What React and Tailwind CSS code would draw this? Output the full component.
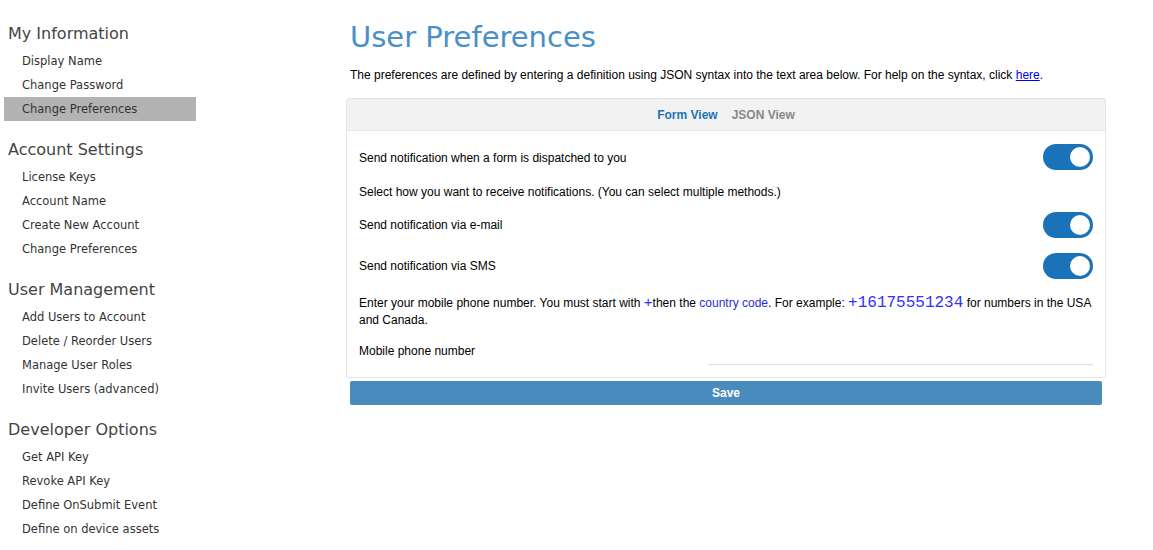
import { useState } from 'react'

const NAV = [
  { title: 'My Information', items: ['Display Name', 'Change Password', 'Change Preferences'] },
  { title: 'Account Settings', items: ['License Keys', 'Account Name', 'Create New Account', 'Change Preferences'] },
  { title: 'User Management', items: ['Add Users to Account', 'Delete / Reorder Users', 'Manage User Roles', 'Invite Users (advanced)'] },
  { title: 'Developer Options', items: ['Get API Key', 'Revoke API Key', 'Define OnSubmit Event', 'Define on device assets'] },
]

const Toggle = ({ on, onChange }) => (
  <button
    type="button"
    onClick={onChange}
    className={`relative w-[50px] h-[26px] rounded-full shrink-0 ${on ? 'bg-[#1a73b9]' : 'bg-[#ccc]'}`}
  >
    <span
      className={`absolute top-[3px] w-[20px] h-[20px] rounded-full bg-white ${on ? 'left-[27px]' : 'left-[3px]'}`}
    />
  </button>
)

const Sidebar = () => (
  <nav className="w-[196px] shrink-0 pl-[4px] pt-[23px] font-['DejaVu_Sans',sans-serif] text-[#333]">
    {NAV.map((sec) => (
      <div key={sec.title} className="mb-[18px]">
        <h3 className="pl-[4px] text-[16px] leading-[22px] text-[#444]">{sec.title}</h3>
        <ul className="mt-[4px]">
          {sec.items.map((it, i) => (
            <li
              key={it}
              className={`h-[24px] leading-[24px] pl-[18px] text-[11.5px] ${
                sec.title === 'My Information' && i === 2 ? 'bg-[#b3b3b3]' : ''
              }`}
            >
              {it}
            </li>
          ))}
        </ul>
      </div>
    ))}
  </nav>
)

export default function App() {
  const [dispatch, setDispatch] = useState(true)
  const [email, setEmail] = useState(true)
  const [sms, setSms] = useState(true)
  const [tab, setTab] = useState('form')

  return (
    <div className="flex w-[1153px] min-h-[550px] bg-white font-['Liberation_Sans',Arial,sans-serif] text-[12px] text-black">
      <Sidebar />
      <main className="w-[760px] ml-[150px] pt-[17px]">
        <h1 className="pl-[4px] text-[29px] leading-[40px] text-[#4a8fc5] font-['DejaVu_Sans',sans-serif]">
          User Preferences
        </h1>
        <p className="pl-[4px] mt-[10px] leading-[16px]">
          The preferences are defined by entering a definition using JSON syntax into the text area below. For help on the syntax, click{' '}
          <a href="#" className="text-[#0000ee] underline">here</a>.
        </p>
        <div className="mt-[15px] border border-[#e6e6e6] rounded-[2px]">
          <div className="h-[32px] bg-[#f2f2f2] border-b border-[#e6e6e6] flex items-center justify-center gap-[14px] font-bold">
            <button
              type="button"
              onClick={() => setTab('form')}
              className={tab === 'form' ? 'text-[#1a73b9]' : 'text-[#888]'}
            >
              Form View
            </button>
            <button
              type="button"
              onClick={() => setTab('json')}
              className={tab === 'json' ? 'text-[#1a73b9]' : 'text-[#888]'}
            >
              JSON View
            </button>
          </div>
          <div className="px-[12px] pt-[13px] pb-[12px]">
            <div className="flex items-center justify-between h-[26px]">
              <span className="pt-[1px]">Send notification when a form is dispatched to you</span>
              <Toggle on={dispatch} onChange={() => setDispatch(!dispatch)} />
            </div>
            <p className="mt-[14px] leading-[16px]">
              Select how you want to receive notifications. (You can select multiple methods.)
            </p>
            <div className="mt-[12px] flex items-center justify-between h-[26px]">
              <span>Send notification via e-mail</span>
              <Toggle on={email} onChange={() => setEmail(!email)} />
            </div>
            <div className="mt-[15px] flex items-center justify-between h-[26px]">
              <span>Send notification via SMS</span>
              <Toggle on={sms} onChange={() => setSms(!sms)} />
            </div>
            <p className="mt-[15px] leading-[17px]">
              Enter your mobile phone number. You must start with{' '}
              <span className="text-[#2b2bff] text-[15px] leading-[15px]">+</span>then the{' '}
              <a href="#" className="text-[#2b2bd6]">country code</a>. For example:{' '}
              <span className="text-[#3030ff] text-[16px] leading-[15px] font-['Liberation_Mono',monospace]">+16175551234</span>{' '}
              for numbers in the USA and Canada.
            </p>
            <div className="mt-[14px] flex justify-between h-[22px]">
              <span className="leading-[16px]">Mobile phone number</span>
              <input
                type="text"
                className="w-[385px] h-[22px] border-b border-[#ddd] outline-none"
              />
            </div>
          </div>
        </div>
        <button
          type="button"
          className="mt-[3px] ml-[4px] w-[752px] h-[24px] rounded-[2px] bg-[#4a8bbd] text-white font-bold"
        >
          Save
        </button>
      </main>
    </div>
  )
}
